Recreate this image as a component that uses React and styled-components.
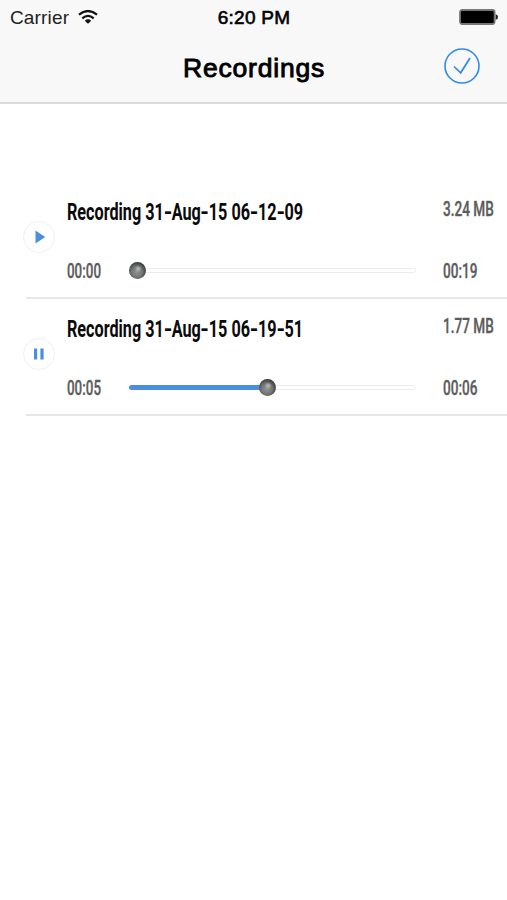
import styled, { createGlobalStyle } from "styled-components";

const GlobalStyle = createGlobalStyle`
  * {
    box-sizing: border-box;
  }

  body {
    margin: 0;
    background: #ffffff;
    font-family: "Liberation Sans", Arial, sans-serif;
  }
`;

const Screen = styled.div`
  width: 507px;
  height: 900px;
  overflow: hidden;
  background: #ffffff;
`;

const Header = styled.header`
  height: 104px;
  background: #f8f8f8;
  border-bottom: 2px solid #dadada;
`;

const StatusBar = styled.div`
  display: grid;
  grid-template-columns: 1fr auto 1fr;
  align-items: center;
  height: 34px;
  padding: 0 9px 0 10px;
`;

const Carrier = styled.div`
  display: flex;
  align-items: center;
  gap: 9px;
  padding-top: 1px;
  font-size: 19px;
  line-height: 33px;
  letter-spacing: 0.15px;
  color: #222222;
`;

const Clock = styled.div`
  padding-top: 1px;
  font-size: 19px;
  line-height: 33px;
  letter-spacing: 0.25px;
  color: #000000;
  -webkit-text-stroke: 0.6px #000000;
`;

const BatteryIcon = styled.svg`
  justify-self: end;
`;

const NavBar = styled.div`
  display: grid;
  grid-template-columns: 1fr auto 1fr;
  align-items: center;
  height: 64px;
  padding-right: 27px;
  padding-left: 28px;
`;

const Title = styled.h1`
  grid-column: 2;
  margin: 4px 0 0;
  font-size: 26.5px;
  font-weight: normal;
  line-height: 32px;
  letter-spacing: 0.8px;
  color: #000000;
  -webkit-text-stroke: 0.9px #000000;
`;

const DoneButton = styled.button`
  justify-self: end;
  width: 36px;
  height: 36px;
  padding: 0;
  border: none;
  background: none;

  svg {
    display: block;
  }
`;

const List = styled.ul`
  margin: 0;
  padding: 78px 0 0 26px;
  list-style: none;
`;

const Row = styled.li`
  display: grid;
  grid-template-columns: 41px 376px 1fr;
  height: 117px;
  border-bottom: 2px solid #e6e6e6;
`;

const PlayButton = styled.button`
  width: 32px;
  height: 32px;
  margin: 39px 0 0 -3px;
  padding: 0;
  border: 1px solid #f0f0f0;
  border-radius: 50%;
  background: #ffffff;

  svg {
    display: block;
  }
`;

const Main = styled.div`
  padding-top: 18px;
`;

const Side = styled.div`
  padding-top: 14px;
`;

/* Roboto squeezed to the width of a condensed face */
const Condensed = styled.span`
  display: block;
  width: max-content;
  font-family: Roboto, sans-serif;
  line-height: 26px;
  white-space: nowrap;
  transform: scaleX(${(props) => props.$squeeze});
  transform-origin: left center;
`;

const Name = styled(Condensed)`
  font-size: 23px;
  font-weight: 700;
  color: #0a0a0a;
`;

const Dash = styled.span`
  display: inline-block;
  margin: 0 1.1px;
  transform: scaleX(1.35);
`;

const Meta = styled(Condensed)`
  font-size: 20px;
  font-weight: 500;
  color: #5c5c5c;
  -webkit-text-stroke: 0.35px #5c5c5c;
`;

const Progress = styled.div`
  display: grid;
  grid-template-columns: 62px 287px;
  align-items: center;
  margin-top: 32px;
`;

const Duration = styled.div`
  margin-top: 36px;
`;

const Track = styled.div`
  position: relative;
  height: 5px;
  margin-top: -2px;
  border: 1px solid #ececec;
  border-radius: 3px;
  background: #ffffff;
`;

const Fill = styled.div`
  height: 5px;
  margin: -1px;
  border-radius: 3px;
  background: #4a8fdf;
`;

const Knob = styled.div`
  position: absolute;
  top: -7px;
  width: 17px;
  height: 17px;
  border-radius: 50%;
  background:
    radial-gradient(circle at 54% 40%, #bcbebe 0%, rgba(160, 162, 162, 0) 26%),
    radial-gradient(circle at 46% 58%, #929494 0%, #747676 40%, #343636 75%);
`;

const recordings = [
  {
    name: "Recording 31-Aug-15 06-12-09",
    size: "3.24 MB",
    elapsed: "00:00",
    total: "00:19",
    position: 0,
    playing: false,
  },
  {
    name: "Recording 31-Aug-15 06-19-51",
    size: "1.77 MB",
    elapsed: "00:05",
    total: "00:06",
    position: 130,
    playing: true,
  },
];

const Wifi = () => (
  <svg width="20" height="15" viewBox="0 0 20 15">
    <g fill="none" stroke="#111111" strokeWidth="2.2">
      <path d="M1 4.7 Q10 -2.7 19 4.7" />
      <path d="M4.3 8.3 Q10 3.5 15.7 8.3" />
    </g>
    <path d="M6.8 10.7 Q10 8 13.2 10.7 L10 13.8 Z" fill="#111111" />
  </svg>
);

const Battery = () => (
  <BatteryIcon width="39" height="16" viewBox="0 0 39 16">
    <rect
      x="1"
      y="1"
      width="34.6"
      height="14"
      rx="2.2"
      fill="#000000"
      stroke="#777777"
      strokeWidth="1.8"
    />
    <path d="M36.7 5.2 Q39 5.6 39 8 Q39 10.4 36.7 10.8 Z" fill="#222222" />
  </BatteryIcon>
);

const RecordingRow = ({ item }) => {
  return (
    <Row>
      <PlayButton aria-label={item.playing ? "Pause" : "Play"}>
        <svg width="30" height="30" viewBox="0 0 30 30" fill="#4a8fdf">
          {item.playing ? (
            <path d="M10 9.5h3.2v11H10zM16.4 9.5h3.2v11h-3.2z" />
          ) : (
            <path d="M11.5 8.6 L21.2 15 L11.5 21.4 Z" />
          )}
        </svg>
      </PlayButton>
      <Main>
        <Name $squeeze={0.704}>
          {item.name
            .split(/(-)/)
            .map((part, i) => (part === "-" ? <Dash key={i}>-</Dash> : part))}
        </Name>
        <Progress>
          <Meta $squeeze={0.67}>{item.elapsed}</Meta>
          <Track>
            {item.position > 0 && <Fill style={{ width: item.position + 4 }} />}
            <Knob style={{ left: item.position - 1 }} />
          </Track>
        </Progress>
      </Main>
      <Side>
        <Meta $squeeze={0.68}>{item.size}</Meta>
        <Duration>
          <Meta $squeeze={0.68}>{item.total}</Meta>
        </Duration>
      </Side>
    </Row>
  );
};

const App = () => {
  return (
    <Screen>
      <GlobalStyle />
      <Header>
        <StatusBar>
          <Carrier>
            Carrier
            <Wifi />
          </Carrier>
          <Clock>6:20 PM</Clock>
          <Battery />
        </StatusBar>
        <NavBar>
          <Title>Recordings</Title>
          <DoneButton aria-label="Done">
            <svg width="36" height="36" viewBox="0 0 36 36" fill="none">
              <circle cx="18" cy="18" r="17" stroke="#2f8bf0" strokeWidth="1.6" />
              <path
                d="M10 18.5 L16.7 24.8 L26 10"
                stroke="#2f8bf0"
                strokeWidth="1.7"
              />
            </svg>
          </DoneButton>
        </NavBar>
      </Header>
      <List>
        {recordings.map((item) => (
          <RecordingRow key={item.name} item={item} />
        ))}
      </List>
    </Screen>
  );
};

export default App;
